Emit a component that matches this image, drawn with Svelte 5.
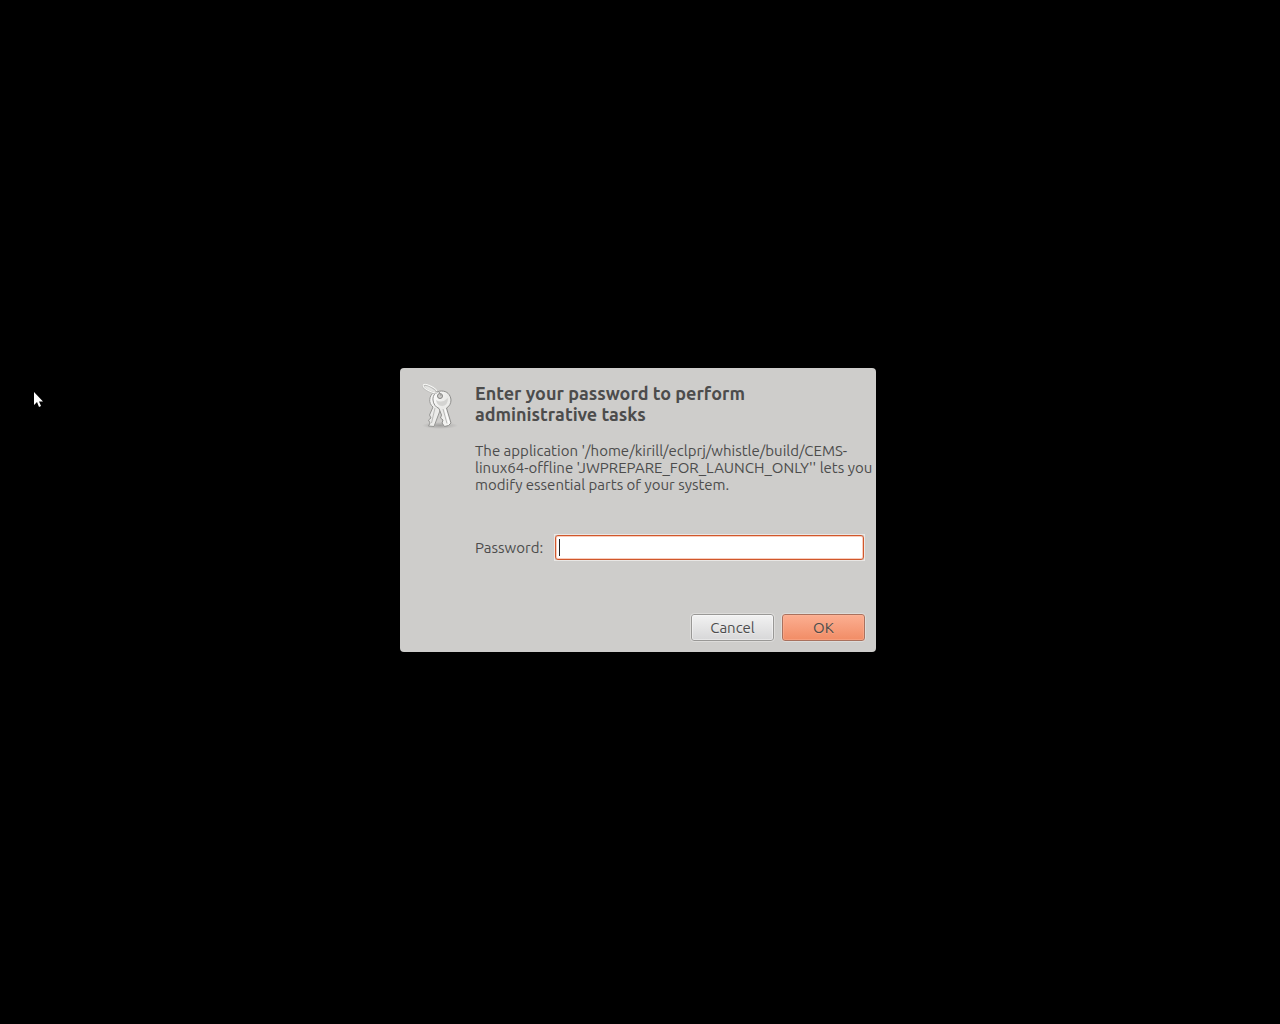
<script>
  let password = $state('');
  const titleLines = ['Enter your password to perform', 'administrative tasks'];
  const messageLines = [
    "The application '/home/kirill/eclprj/whistle/build/CEMS-",
    "linux64-offline 'JWPREPARE_FOR_LAUNCH_ONLY'' lets you",
    'modify essential parts of your system.'
  ];
</script>

<main class="screen">
  <form class="dialog" onsubmit={(e) => e.preventDefault()}>
    <div class="content">
      <svg class="keys" viewBox="0 0 48 48" aria-hidden="true">
        <defs>
          <linearGradient id="metal" x1="0" y1="0" x2="1" y2="1">
            <stop offset="0" stop-color="#ffffff" />
            <stop offset="0.5" stop-color="#e9e9e7" />
            <stop offset="1" stop-color="#fafaf8" />
          </linearGradient>
          <radialGradient id="shade">
            <stop offset="0" stop-color="#000" stop-opacity="0.22" />
            <stop offset="1" stop-color="#000" stop-opacity="0" />
          </radialGradient>
        </defs>
        <ellipse cx="25" cy="42.500" rx="18" ry="3.500" fill="url(#shade)" />
        <path d="M19 9C14 13 13 20 18 24L14.500 32L16 35L13.500 37L15 40L13.500 43L19 43.500L26 25L28 11Z" fill="url(#metal)" stroke="#969694" />
        <path d="M20 25L16.500 40" fill="none" stroke="#bbbbb9" />
        <path d="M26.500 8C21 8 17.500 12 18 17C18.300 21 20.500 24 24 25.500L26.500 32L25.500 35L28 37L27 40L29.500 43.500L33.500 42.500L36 40L31.500 25C34.500 23.500 36 20 36 17C35.500 11.500 32 8 26.500 8Z" fill="url(#metal)" stroke="#8f8f8d" />
        <path d="M28 26L32 40.500" fill="none" stroke="#b8b8b6" />
        <path d="M30 26L34 40" fill="none" stroke="#fff" />
        <path d="M21 17Q27 21 33 15Q33 22 27.500 23Q22 23 21 17Z" fill="#d3d3d1" />
        <circle cx="25" cy="13" r="2.500" fill="#cecdcb" stroke="#858583" />
        <ellipse cx="15" cy="6" rx="7.500" ry="2.500" transform="rotate(27 15 6)" fill="#e4e4e2" stroke="#bcbcba" stroke-width="2" />
        <ellipse cx="15" cy="5.500" rx="7.500" ry="2.500" transform="rotate(27 15 5.500)" fill="none" stroke="#f9f9f7" />
        <path d="M20.500 9Q25 7 26 13" fill="none" stroke="#a0a09e" />
      </svg>
      <div class="details">
        <h1>{#each titleLines as line}<span>{line}</span>{/each}</h1>
        <p>{#each messageLines as line}<span>{line}</span>{/each}</p>
        <div class="field">
          <label for="password">Password:</label>
          <div class="entry">
            <input id="password" type="password" bind:value={password} />
            {#if !password}<i class="caret"></i>{/if}
          </div>
        </div>
      </div>
    </div>
    <div class="actions">
      <button type="button">Cancel</button>
      <button type="submit" class="primary">OK</button>
    </div>
  </form>
  <svg class="pointer" viewBox="0 0 11 18" aria-hidden="true">
    <path d="M1 1V14L4 11L6 16L8 15L6 10.500H10Z" fill="#fff" />
  </svg>
</main>

<style>
  :global(body) {
    background: #000;
  }
  .screen {
    position: relative;
    box-sizing: border-box;
    min-height: 100vh;
    padding: 0 4px 4px 0;
    display: flex;
    align-items: center;
    justify-content: center;
    background: #000;
    color: #4c4c4c;
    font-family: Ubuntu, 'Noto Sans', sans-serif;
    font-size: 15px;
    line-height: 17px;
  }
  .dialog {
    box-sizing: border-box;
    width: 100%;
    max-width: 476px;
    padding: 15px 10px 10px;
    border-radius: 4px;
    background: #cecdcb;
  }
  .content {
    display: flex;
    gap: 12px;
    padding: 0 1px 0 5px;
  }
  .keys {
    flex: none;
    width: 48px;
    height: 48px;
  }
  .details {
    flex: 1;
    min-width: 0;
  }
  h1,
  p {
    margin: 0;
  }
  h1 span,
  p span {
    display: block;
    white-space: nowrap;
  }
  h1 {
    font-size: 18px;
    line-height: 21px;
    font-weight: 700;
  }
  p {
    margin-top: 17px;
  }
  .field {
    display: flex;
    align-items: center;
    gap: 11px;
    margin-top: 41px;
  }
  .entry {
    position: relative;
    display: flex;
    flex: 1;
    border: 1px solid #e9e7e5;
  }
  input {
    box-sizing: border-box;
    width: 100%;
    height: 25px;
    padding: 0 4px;
    border: 1px solid #d0572b;
    border-radius: 3px;
    outline: none;
    background: #fff;
    box-shadow: inset 0 0 0 1px #f9cdbd;
    color: #4c4c4c;
    font: inherit;
    caret-color: transparent;
  }
  .caret {
    position: absolute;
    left: 4px;
    top: 4px;
    width: 1px;
    height: 17px;
    background: #222;
  }
  .actions {
    display: flex;
    justify-content: flex-end;
    gap: 6px;
    margin-top: 52px;
  }
  button {
    box-sizing: border-box;
    width: 85px;
    height: 29px;
    padding: 0;
    border: 1px solid #dddcda;
    border-radius: 4px;
    background: linear-gradient(#f3f3f3, #d6d6d7);
    box-shadow: inset 0 0 0 1px #999896, inset 0 0 0 2px #ffffff66;
    color: #4c4c4c;
    font: inherit;
    text-shadow: 0 1px #ffffff66;
  }
  .primary {
    background: linear-gradient(#fcb093, #f18b64);
    box-shadow: inset 0 0 0 1px #a9715e, inset 0 0 0 2px #ffb89d66;
    text-shadow: 0 1px #ffc0a066;
  }
  .pointer {
    position: absolute;
    left: 33px;
    top: 391px;
    width: 11px;
    height: 18px;
  }
</style>
